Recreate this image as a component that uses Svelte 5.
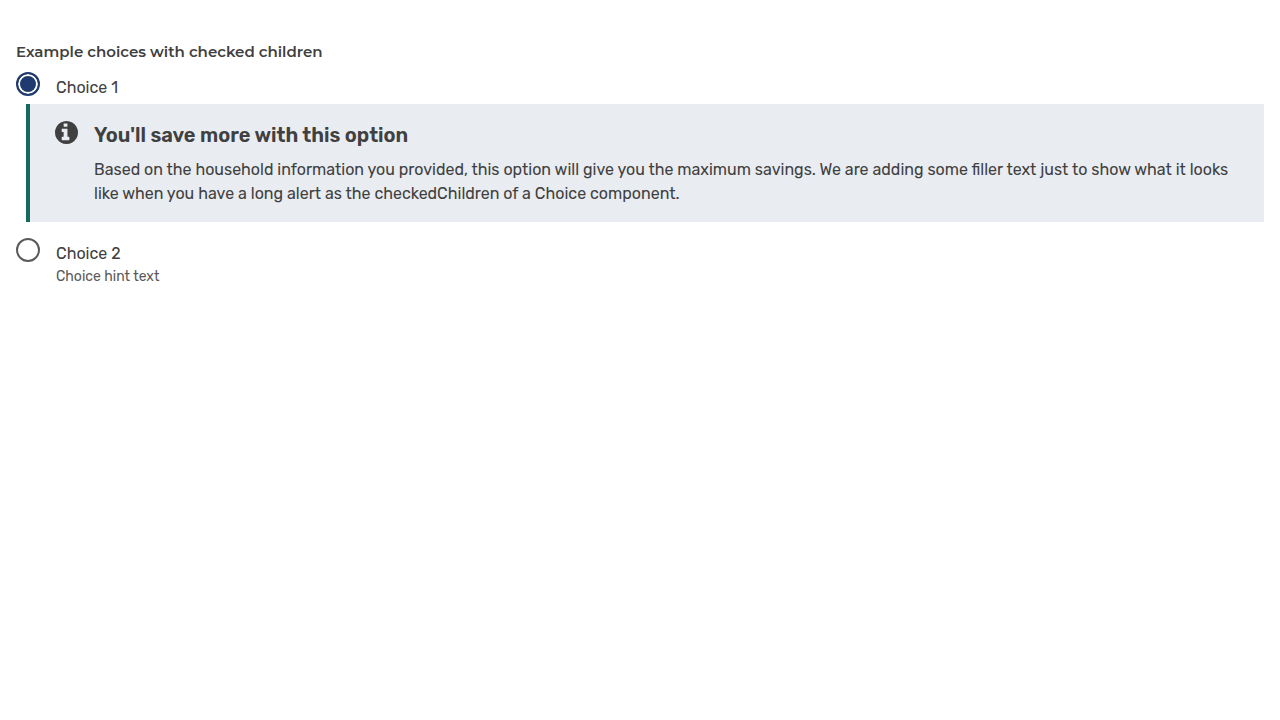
<script>
  let selected = $state('one');
</script>

<form>
  <fieldset>
    <legend>Example choices with checked children</legend>

    <div class="choice">
      <input type="radio" id="choice-one" name="choices" value="one" bind:group={selected} />
      <label for="choice-one">Choice 1</label>
    </div>

    {#if selected === 'one'}
      <div class="checked-children">
        <div class="alert" role="status">
          <svg class="icon" viewBox="61 61 1603 1603" aria-hidden="true">
            <path
              fill="currentColor"
              d="M1088 1376v-160q0-14-9-23t-23-9h-96v-512q0-14-9-23t-23-9h-320q-14 0-23 9t-9 23v160q0 14 9 23t23 9h96v320h-96q-14 0-23 9t-9 23v160q0 14 9 23t23 9h448q14 0 23-9t9-23zM960 480v-160q0-14-9-23t-23-9h-192q-14 0-23 9t-9 23v160q0 14 9 23t23 9h192q14 0 23-9t9-23zM1664 896q0 209-103 385.5t-279.5 279.5-385.5 103-385.5-103-279.5-279.5-103-385.5 103-385.5 279.5-279.5 385.5-103 385.5 103 279.5 279.5 103 385.5z"
            />
          </svg>
          <div class="body">
            <h2>You'll save more with this option</h2>
            <p>
              Based on the household information you provided, this option will give you the maximum
              savings. We are adding some filler text just to show what it looks like when you have a
              long alert as the checkedChildren of a Choice component.
            </p>
          </div>
        </div>
      </div>
    {/if}

    <div class="choice">
      <input
        type="radio"
        id="choice-two"
        name="choices"
        value="two"
        aria-describedby="choice-two-hint"
        bind:group={selected}
      />
      <div>
        <label for="choice-two">Choice 2</label>
        <p class="hint" id="choice-two-hint">Choice hint text</p>
      </div>
    </div>
  </fieldset>
</form>

<style>
  :global(body) {
    background: #ffffff;
  }

  form {
    padding: 40px 16px 16px;
    color: #404040;
    font-family: Rubik, Roboto, sans-serif;
    font-size: 16px;
    line-height: 24px;
  }

  fieldset {
    min-width: 0;
    margin: 0;
    padding: 0;
    border: 0;
  }

  legend {
    padding: 0;
    font-family: Montserrat, "Open Sans", sans-serif;
    font-size: 15px;
    font-weight: 600;
  }

  .choice {
    display: flex;
    align-items: flex-start;
    gap: 16px;
    padding-top: 8px;
  }

  input {
    flex: none;
    appearance: none;
    box-sizing: border-box;
    width: 24px;
    height: 24px;
    margin: 0;
    border: 2px solid #5a5a5a;
    border-radius: 50%;
    background: #ffffff;
  }

  input:checked {
    border-color: #1f3a6e;
    background: #1f3a6e;
    box-shadow: inset 0 0 0 2px #ffffff;
  }

  label {
    display: block;
    padding-top: 4px;
  }

  .hint {
    margin: 0;
    color: #5a5a5a;
    font-size: 14px;
    line-height: 22px;
  }

  .checked-children {
    padding: 4px 0 8px 10px;
  }

  .alert {
    display: flex;
    align-items: flex-start;
    gap: 16px;
    padding: 16px 16px 16px 24px;
    border-left: 4px solid #146a5d;
    background: #e9ecf1;
  }

  .icon {
    flex: none;
    width: 24px;
    height: 24px;
  }

  h2 {
    margin: 0 0 8px;
    font-size: 20px;
    font-weight: 600;
    line-height: 30px;
  }

  .alert p {
    margin: 0;
  }
</style>
